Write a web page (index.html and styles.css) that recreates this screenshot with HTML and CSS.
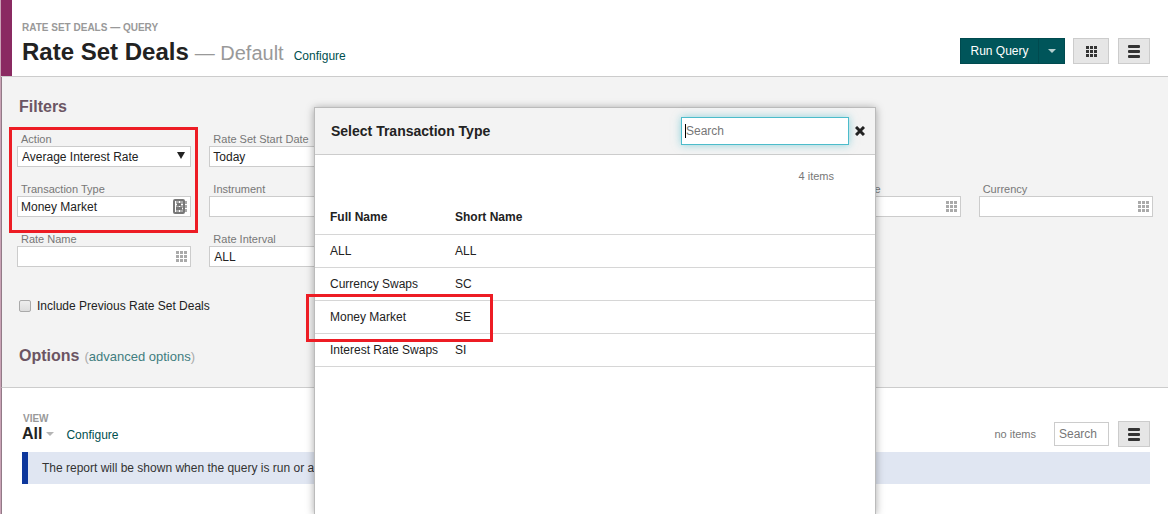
FILE: index.html
```html
<!DOCTYPE html>
<html lang="en">
<head>
<meta charset="utf-8">
<title>Rate Set Deals</title>
<link rel="stylesheet" href="styles.css">
</head>
<body>
<svg class="symbols" aria-hidden="true">
  <symbol id="grid" viewBox="0 0 11 11"><path d="M0 0h3v3H0zM4 0h3v3H4zM8 0h3v3H8zM0 4h3v3H0zM4 4h3v3H4zM8 4h3v3H8zM0 8h3v3H0zM4 8h3v3H4zM8 8h3v3H8z"/></symbol>
  <symbol id="menu" viewBox="0 0 12 13"><rect width="12" height="3" rx="1"/><rect y="5" width="12" height="3" rx="1"/><rect y="10" width="12" height="3" rx="1"/></symbol>
  <symbol id="caret" viewBox="0 0 8 4"><path d="M0 0h8L4 4z"/></symbol>
</svg>
<div class="page">
  <header class="header">
    <div class="titles">
      <div class="eyebrow">RATE SET DEALS — QUERY</div>
      <div class="title-row">
        <h1 class="title">Rate Set Deals</h1>
        <span class="variant">— Default</span>
        <a class="link" href="#">Configure</a>
      </div>
    </div>
    <div class="actions">
      <div class="split">
        <button class="run" type="button">Run Query</button>
        <button class="run-more" type="button" aria-label="More run options"><svg class="caret"><use href="#caret"/></svg></button>
      </div>
      <button class="tool tool-wide" type="button" aria-label="Grid"><svg class="grid-icon"><use href="#grid"/></svg></button>
      <button class="tool" type="button" aria-label="Menu"><svg class="menu-icon"><use href="#menu"/></svg></button>
    </div>
  </header>

  <section class="filters">
    <h2 class="heading">Filters</h2>
    <div class="fields">
      <div class="field">
        <label for="action">Action</label>
        <div class="control"><select id="action"><option>Average Interest Rate</option></select><svg class="arrow" viewBox="0 0 8 7"><path d="M0 0h8L4 7z"/></svg></div>
      </div>
      <div class="field field-pair">
        <label for="start">Rate Set Start Date</label>
        <div class="control"><input id="start" type="text" value="Today"></div>
      </div>
      <div class="field">
        <label for="type">Transaction Type</label>
        <div class="control"><input id="type" type="text" value="Money Market"><svg class="lookup"><use href="#grid"/></svg>
          <svg class="card" viewBox="0 0 13 15"><rect x="1" y="1" width="10" height="13" rx="1"/><path class="person" d="M4 4h4v3H4zM3 8h6v3H3z"/></svg></div>
      </div>
      <div class="field">
        <label for="instrument">Instrument</label>
        <div class="control"><input id="instrument" type="text"><svg class="lookup"><use href="#grid"/></svg></div>
      </div>
      <div class="field field-fifth">
        <label for="cptype">Counterparty Type</label>
        <div class="control"><input id="cptype" type="text"><svg class="lookup"><use href="#grid"/></svg></div>
      </div>
      <div class="field">
        <label for="currency">Currency</label>
        <div class="control"><input id="currency" type="text"><svg class="lookup"><use href="#grid"/></svg></div>
      </div>
      <div class="field">
        <label for="rate">Rate Name</label>
        <div class="control"><input id="rate" type="text"><svg class="lookup"><use href="#grid"/></svg></div>
      </div>
      <div class="field">
        <label for="interval">Rate Interval</label>
        <div class="control"><select id="interval"><option>ALL</option></select></div>
      </div>
    </div>
    <label class="check"><input type="checkbox">Include Previous Rate Set Deals</label>
    <div class="options">
      <h2 class="heading">Options</h2>
      <span class="advanced">(<a href="#">advanced options</a>)</span>
    </div>
  </section>

  <section class="report">
    <div class="view-bar">
      <div class="view">
        <div class="view-label">VIEW</div>
        <div class="view-row">
          <button class="view-name" type="button">All<svg class="caret"><use href="#caret"/></svg></button>
          <a class="link" href="#">Configure</a>
        </div>
      </div>
      <div class="view-tools">
        <span class="count">no items</span>
        <input class="view-search" type="text" placeholder="Search" aria-label="Search report">
        <button class="tool" type="button" aria-label="Report menu"><svg class="menu-icon"><use href="#menu"/></svg></button>
      </div>
    </div>
    <p class="message">The report will be shown when the query is run or a filter is changed.</p>
  </section>

  <div class="modal" role="dialog" aria-labelledby="modal-title">
    <div class="modal-head">
      <h2 class="modal-title" id="modal-title">Select Transaction Type</h2>
      <div class="search-box"><input class="modal-search" type="text" placeholder="Search" aria-label="Search types"><span class="cursor"></span></div>
      <button class="close" type="button" aria-label="Close"><svg viewBox="0 0 10 10"><path d="M1 1l8 8M9 1L1 9"/></svg></button>
    </div>
    <div class="modal-count">4 items</div>
    <table class="types">
      <thead><tr><th class="full">Full Name</th><th>Short Name</th></tr></thead>
      <tbody>
        <tr><td>ALL</td><td>ALL</td></tr>
        <tr><td>Currency Swaps</td><td>SC</td></tr>
        <tr><td>Money Market</td><td>SE</td></tr>
        <tr><td>Interest Rate Swaps</td><td>SI</td></tr>
      </tbody>
    </table>
  </div>
  <div class="mark mark-fields"></div>
  <div class="mark mark-row"></div>
</div>
</body>
</html>
```
FILE: styles.css
```css
* { box-sizing: border-box; }
body { margin: 0; background: #fff; color: #222; font: 12px/16px "Liberation Sans", Arial, sans-serif; }
h1, h2, p { margin: 0; }
a { text-decoration: none; }
button, input, select { font: inherit; color: inherit; margin: 0; border-radius: 0; }
button { padding: 0; display: flex; align-items: center; justify-content: center; }
svg { display: block; fill: currentColor; }
.symbols { position: absolute; width: 0; height: 0; }
.page { position: relative; min-height: 100vh; overflow: hidden; border-left: 1px solid #c9a2b5; }
.link { color: #00504f; }

.header { display: flex; justify-content: space-between; height: 77px; padding: 20px 18px 0 21px; box-shadow: inset 11px 0 #8a2a62; border-bottom: 1px solid #ccc; }
.eyebrow, .view-label { font-size: 10px; font-weight: bold; color: #999; }
.title-row { display: flex; align-items: baseline; gap: 6px; }
.title { font-size: 24px; line-height: 32px; }
.variant { font-size: 20px; color: #999; margin-right: 4px; }
.actions { display: flex; gap: 8px; padding-top: 18px; }
.split { display: flex; height: 26px; background: #00555a; color: #fff; }
.run { width: 79px; border: 1px solid #004a4f; background: none; }
.run-more { width: 26px; border: 1px solid #004a4f; border-left: 0; background: none; color: #b5d0d0; }
.caret { width: 8px; height: 4px; }
.tool { width: 32px; height: 26px; border: 1px solid #ccc; background: #e6e6e6; color: #333; }
.tool-wide { width: 36px; margin-right: 1px; }
.grid-icon { width: 11px; height: 11px; }
.menu-icon { width: 12px; height: 13px; }

.filters { padding: 20px 15px 21px 15px; background: #f3f3f3; border-left: 1px solid #927a87; border-bottom: 1px solid #ccc; }
.heading { font-size: 16px; line-height: 20px; color: #6b5563; margin-left: 2px; }
.fields { display: grid; grid-template-columns: repeat(6, 1fr); gap: 15px 18px; padding-top: 15px; }
.field { min-width: 0; }
.field-pair { grid-column: 2 / 7; width: 174px; }
.field-fifth { grid-column: 5; }
.field label { display: block; padding-left: 4px; font-size: 11px; line-height: 14px; color: #777; }
.control { position: relative; height: 21px; }
.control input, .control select { display: block; width: 100%; height: 21px; padding: 0 3px; border: 1px solid #ccc; background: #fff; appearance: none; }
.control select { padding: 0 4px; }
.arrow { position: absolute; right: 6px; top: 6px; width: 8px; height: 7px; }
.lookup { position: absolute; right: 4px; top: 5px; width: 11px; height: 11px; color: #aaa; }
.card { position: absolute; right: 5px; top: 3px; width: 13px; height: 15px; fill: none; stroke: #777; stroke-width: 2; }
.card .person { fill: #777; stroke: none; }
.check { display: flex; align-items: center; gap: 6px; margin: 31px 0 0 2px; width: max-content; }
.check input { appearance: none; width: 12px; height: 12px; border: 1px solid #aaa; border-radius: 2px; background: linear-gradient(#eee, #ddd); }
.options { display: flex; align-items: baseline; gap: 5px; padding-top: 32px; }
.advanced { font-size: 13px; color: #aaa; }
.advanced a { color: #417d80; }

.report { padding: 23px 18px 30px 20px; border-left: 1px solid #927a87; }
.view-bar { display: flex; justify-content: space-between; }
.view-label { margin-left: 1px; line-height: 15px; }
.view-row { display: flex; align-items: baseline; gap: 12px; height: 26px; }
.view-name { border: 0; background: none; font-size: 16px; line-height: 16px; font-weight: bold; gap: 4px; }
.view-name .caret { color: #b5b5b5; }
.view-tools { display: flex; align-items: center; gap: 9px; height: 26px; margin-top: 10px; }
.count, .modal-count { font-size: 11px; color: #777; }
.count { margin-right: 9px; }
.view-search { width: 55px; height: 24px; padding: 0 4px; border: 1px solid #ccc; }
::placeholder { color: #777; opacity: 1; }
.message { padding: 8px 14px; border-left: 6px solid #0d379c; background: #e0e6f2; color: #333; }

.modal { position: absolute; left: 313px; right: 292px; top: 107px; bottom: 0; min-height: 407px; background: #fff; border: 1px solid #bbb; border-bottom: 0; box-shadow: 0 1px 8px rgba(0, 0, 0, 0.35); }
.modal-head { display: flex; align-items: center; height: 47px; padding: 0 9px 0 16px; background: #f3f3f3; border-bottom: 1px solid #ccc; }
.modal-title { flex: 1; font-size: 14px; }
.search-box { position: relative; width: 168px; }
.modal-search { display: block; width: 100%; height: 28px; padding: 0 4px; border: 1px solid #4cbccb; box-shadow: 0 0 8px rgba(76, 188, 203, 0.6); }
.cursor { position: absolute; left: 4px; top: 7px; width: 1px; height: 14px; background: #000; }
.close { width: 12px; height: 12px; margin-left: 5px; border: 0; background: none; }
.close svg { width: 10px; height: 10px; stroke: #222; stroke-width: 3; }
.modal-count { padding: 13px 41px 0; text-align: right; }
.types { width: 100%; border-collapse: collapse; margin-top: 17px; text-align: left; }
.types th, .types td { height: 33px; padding: 0; border-bottom: 1px solid #d6d6d6; }
.types th:first-child, .types td:first-child { padding-left: 15px; }
.types .full { width: 140px; }

.mark { position: absolute; border: 3px solid #ed1c24; }
.mark-fields { left: 8px; top: 127px; width: 189px; height: 106px; }
.mark-row { left: 305px; top: 294px; width: 187px; height: 48px; }
```
